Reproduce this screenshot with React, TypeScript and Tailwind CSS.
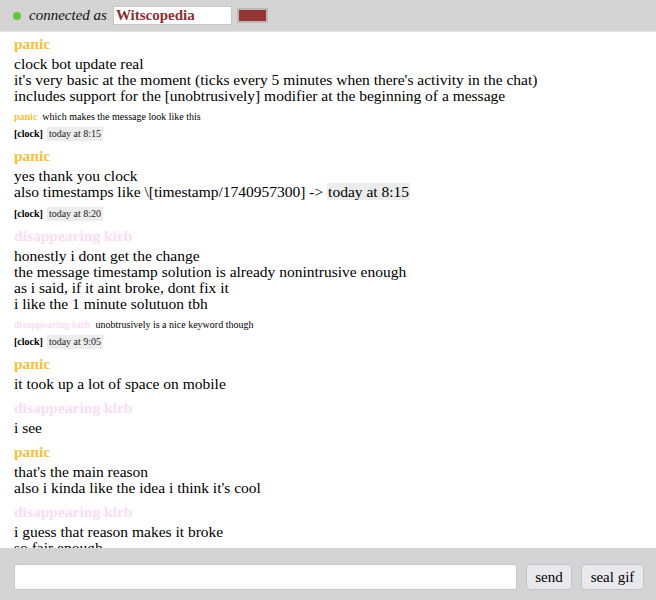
import React from 'react';

type Part = string | { ts: string };

type Msg =
  | { kind: 'big'; who: string; lines: Part[][] }
  | { kind: 'small'; who: string; text: string }
  | { kind: 'clock'; time: string };

const colors: Record<string, string> = {
  panic: 'text-[#f7c233]',
  'disappearing kirb': 'text-[#fbdcf5]',
};

const messages: Msg[] = [
  {
    kind: 'big',
    who: 'panic',
    lines: [
      ['clock bot update real'],
      ["it's very basic at the moment (ticks every 5 minutes when there's activity in the chat)"],
      ['includes support for the [unobtrusively] modifier at the beginning of a message'],
    ],
  },
  { kind: 'small', who: 'panic', text: 'which makes the message look like this' },
  { kind: 'clock', time: 'today at 8:15' },
  {
    kind: 'big',
    who: 'panic',
    lines: [['yes thank you clock'], ['also timestamps like \\[timestamp/1740957300] -> ', { ts: 'today at 8:15' }]],
  },
  { kind: 'clock', time: 'today at 8:20' },
  {
    kind: 'big',
    who: 'disappearing kirb',
    lines: [
      ['honestly i dont get the change'],
      ['the message timestamp solution is already nonintrusive enough'],
      ['as i said, if it aint broke, dont fix it'],
      ['i like the 1 minute solutuon tbh'],
    ],
  },
  { kind: 'small', who: 'disappearing kirb', text: 'unobtrusively is a nice keyword though' },
  { kind: 'clock', time: 'today at 9:05' },
  { kind: 'big', who: 'panic', lines: [['it took up a lot of space on mobile']] },
  { kind: 'big', who: 'disappearing kirb', lines: [['i see']] },
  {
    kind: 'big',
    who: 'panic',
    lines: [["that's the main reason"], ["also i kinda like the idea i think it's cool"]],
  },
  {
    kind: 'big',
    who: 'disappearing kirb',
    lines: [['i guess that reason makes it broke'], ['so fair enough']],
  },
];

function Message({ m }: { m: Msg }) {
  if (m.kind === 'big') {
    return (
      <div className="mb-[7px]">
        <div className={`font-bold text-[15.5px] leading-[18px] mb-[3px] ${colors[m.who]}`}>{m.who}</div>
        {m.lines.map((line, i) => (
          <div key={i} className="text-[15.5px] leading-[16px] text-black">
            {line.map((p, j) =>
              typeof p === 'string' ? (
                <span key={j}>{p}</span>
              ) : (
                <span key={j} className="bg-[#ececec] px-[1px]">
                  {p.ts}
                </span>
              )
            )}
          </div>
        ))}
      </div>
    );
  }
  if (m.kind === 'small') {
    return (
      <div className="text-[10px] leading-[14px] mt-[-1px] mb-[3px] flex gap-[5px]">
        <span className={`font-bold ${colors[m.who]}`}>{m.who}</span>
        <span className="text-black">{m.text}</span>
      </div>
    );
  }
  return (
    <div className="text-[10px] leading-[14px] mb-[6px] flex gap-[4px] items-center">
      <span className="font-bold text-black">[clock]</span>
      <span className="bg-[#ececec] px-[2px] text-[#222]">{m.time}</span>
    </div>
  );
}

export default function App() {
  return (
    <div className="h-[600px] w-full flex flex-col bg-white font-['Liberation_Serif',serif] overflow-hidden">
      {/* header */}
      <div className="h-[32px] shrink-0 bg-[#d4d4d4] border-b border-[#e4e4e4] flex items-center pl-[13px] gap-[6px]">
        <span className="w-[8px] h-[8px] rounded-full bg-[#5fc637]" />
        <span className="italic text-[15px] text-[#111] ml-[2px]">connected as</span>
        <input
          defaultValue="Witscopedia"
          className="w-[119px] h-[19px] bg-white border border-[#c8c8c8] px-[2px] font-bold text-[15px] text-[#8e2f2f] outline-none"
        />
        <span className="w-[31px] h-[15px] bg-[#963434] border-2 border-[#b9b9b9] ml-[-1px]" />
      </div>

      {/* messages */}
      <div className="flex-1 overflow-hidden pl-[14px] pt-[3px]">
        {messages.map((m, i) => (
          <Message key={i} m={m} />
        ))}
      </div>

      {/* footer */}
      <div className="h-[52px] shrink-0 bg-[#d4d4d4] flex items-start pt-[16px] pl-[14px] pr-[12px] gap-[9px]">
        <input className="flex-1 min-w-0 h-[26px] bg-white border border-[#c8c8c8] rounded-[2px] outline-none shadow-[inset_0_-2px_4px_rgba(0,0,0,0.03)]" />
        <button className="w-[46px] h-[26px] bg-[#e9e9ed] border border-[#c4c4c4] rounded-[4px] text-[15px] text-black">
          send
        </button>
        <button className="w-[63px] h-[26px] bg-[#e9e9ed] border border-[#c4c4c4] rounded-[4px] text-[15px] text-black">
          seal gif
        </button>
      </div>
    </div>
  );
}
